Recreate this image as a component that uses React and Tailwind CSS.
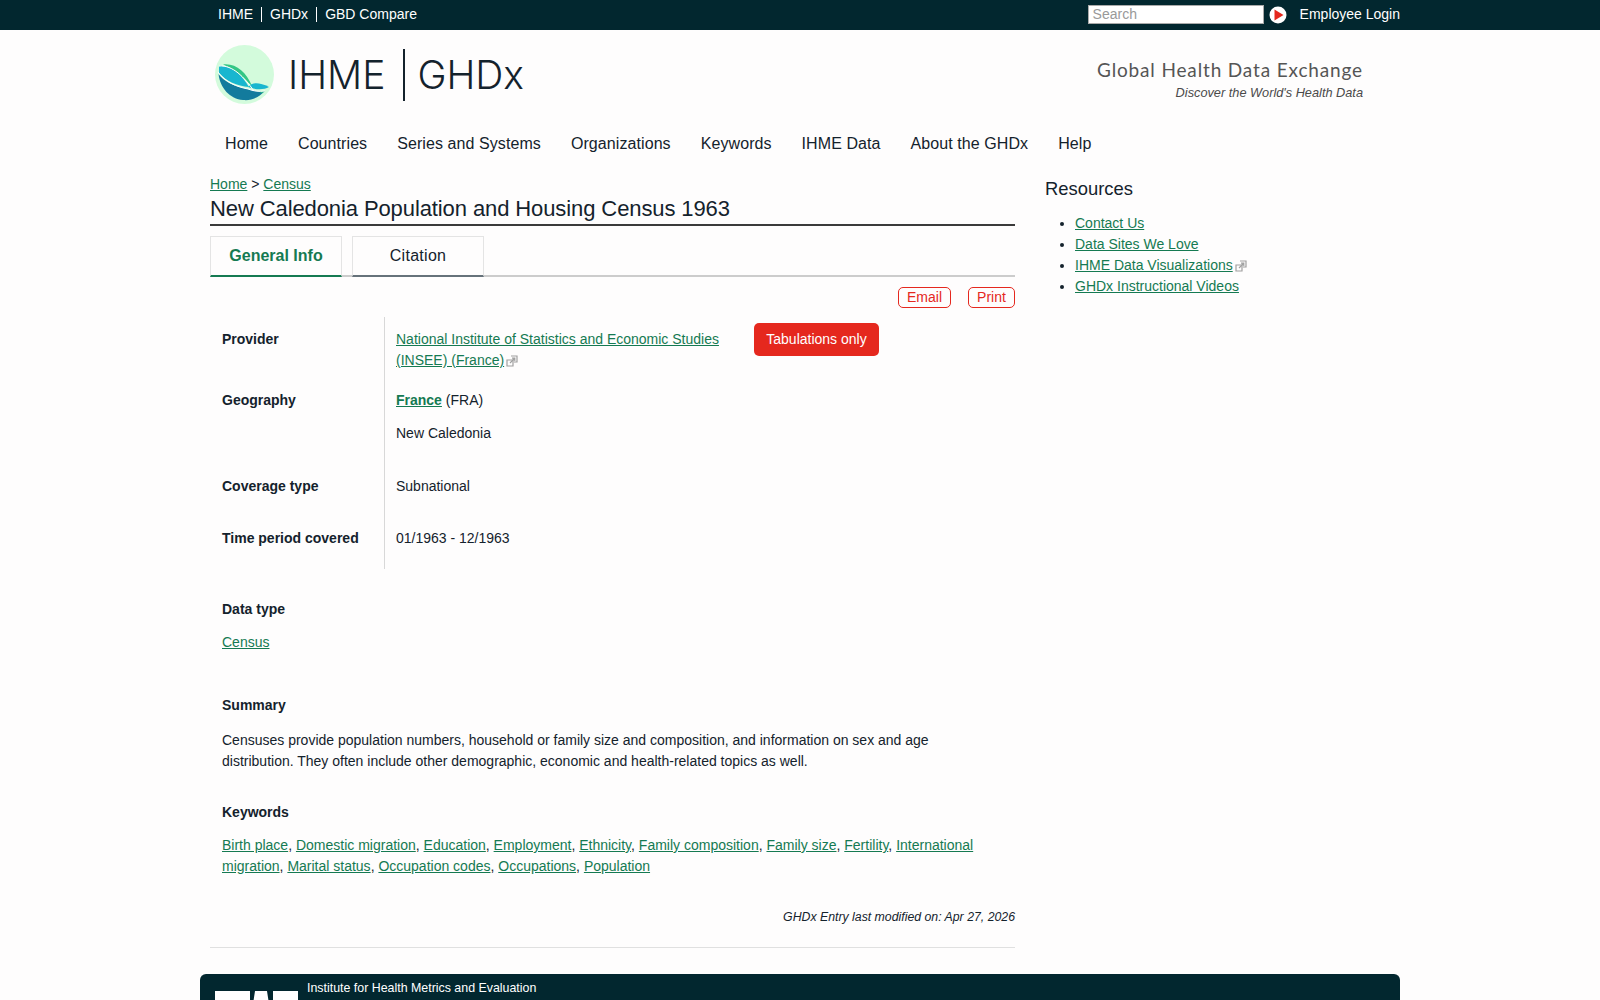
const sans = "font-['Liberation_Sans',Arial,sans-serif]";

function Ext() {
  return (
    <svg className="inline-block ml-[2px] align-[-2px]" width="12" height="12" viewBox="0 0 12 12" fill="none" stroke="#a0a0a0" strokeWidth="1.2">
      <path d="M5 1h6v6H8" />
      <path d="M1 5h6v6H1z" />
      <path d="M4 8l4.5-4.5M6 3.2h2.8V6" />
    </svg>
  );
}

function A({ children, className = "" }) {
  return <a href="#" className={"text-[#157a52] underline " + className}>{children}</a>;
}

function Logo() {
  return (
    <svg width="59" height="59" viewBox="0 0 59 59">
      <circle cx="29.5" cy="29.5" r="29.5" fill="#d3fbdc" />
      <path d="M3.5 29 C8 36 20 42 33 44 C38 46 44 47 50 46 C44 52 37 56 28 55 C15 54 5 43 3.5 29Z" fill="#137b9d" />
      <path d="M4 22 C4 21 5 20.5 7 21 C20 22 28 32 34 42 C22 41 11 36 4 28Z" fill="#18b6cf" />
      <path d="M8 19.5 C21 18 31 27 37 41 C29 34 21 24 8 19.5Z" fill="#33c685" />
      <path d="M33 42 C37 37 44 37 54 42 C49 45 41 45 33 42Z" fill="#18b6cf" />
      <path d="M43 46.5 L50 46 L47 48 Z" fill="#33c685" />
      <path d="M3 27 C10 37 22 42 33 44 C38 46 44 47 50 46 M4 21 C18 20 29 32 39 46" stroke="#fff" strokeWidth="1" fill="none" />
    </svg>
  );
}

function Row({ label, children, h }) {
  return (
    <div className={"flex " + h}>
      <div className="w-[174px] shrink-0 pl-3 pt-[7px] font-bold">{label}</div>
      <div className="flex-1 border-l border-[#d8d8d8] pl-[11px] pt-[7px]">{children}</div>
    </div>
  );
}

export default function App() {
  const nav = ["Home", "Countries", "Series and Systems", "Organizations", "Keywords", "IHME Data", "About the GHDx", "Help"];
  const kw = ["Birth place", "Domestic migration", "Education", "Employment", "Ethnicity", "Family composition", "Family size", "Fertility", "International", "migration", "Marital status", "Occupation codes", "Occupations", "Population"];
  return (
    <div className={"h-[1000px] overflow-hidden bg-[#fefdfd] text-[#14222c] text-[14px] leading-[21px] " + sans}>
      <div className="h-[30px] bg-[#02272f] text-white">
        <div className="mx-auto flex h-full w-[1200px] items-center justify-between pb-[1px]">
          <div className="flex items-center pl-[18px] text-[14px]">
            <a className="pr-2 border-r border-white leading-[15px]">IHME</a>
            <a className="px-2 border-r border-white leading-[15px]">GHDx</a>
            <a className="pl-2 leading-[15px]">GBD Compare</a>
          </div>
          <div className="flex items-center">
            <div className="mr-[5px] flex h-[19px] w-[176px] items-center border border-[#aaa] bg-white pl-1 text-[14px] text-[#999]">Search</div>
            <svg width="18" height="18" viewBox="0 0 18 18" className="mr-[13px]">
              <circle cx="9" cy="9" r="8.5" fill="#fff" />
              <path d="M5.5 3.5L14.5 9L5.5 14.5Z" fill="#e5281e" />
            </svg>
            <span className="text-[14px]">Employee Login</span>
          </div>
        </div>
      </div>

      <div className="mx-auto w-[1200px]">
        <div className="flex h-[90px] items-start justify-between pl-[15px] pr-[37px]">
          <div className="mt-[15px] flex items-center">
            <Logo />
            <span className="ml-[14px] font-['Inter'] text-[39px] font-light leading-none text-[#14222c]">IHME</span>
            <span className="ml-[18px] h-[52px] w-[2px] bg-[#14222c]" />
            <span className="ml-[12px] font-['Inter'] text-[39px] font-light leading-none text-[#14222c]">GHDx</span>
          </div>
          <div className="pt-[28px] text-right">
            <div className="font-['Lato'] text-[19px] leading-[24px] tracking-[0.85px] text-[#555]">Global Health Data Exchange</div>
            <div className="text-[12.75px] italic leading-[22px] text-[#4a4a4a]">Discover the World's Health Data</div>
          </div>
        </div>

        <nav className="flex h-[47px] items-center gap-[30px] pl-[25px] text-[16px] tracking-[0.08px] text-[#14222c]">
          {nav.map((n) => <a key={n}>{n}</a>)}
        </nav>

        <div className="flex pl-[10px]">
          <main className="w-[805px] shrink-0">
            <div className="pt-[7px] leading-[21px]"><A>Home</A> &gt; <A>Census</A></div>
            <h1 className="border-b-2 border-[#3a3a3a] pb-[2px] text-[22px] font-normal leading-[27px] tracking-[-0.1px]">New Caledonia Population and Housing Census 1963</h1>
            <div className="mt-[10px] flex h-[41px] items-stretch gap-[10px] border-b-2 border-[#cccccc] text-[16px]">
              <div className="-mb-[2px] flex w-[132px] items-center justify-center border border-[#e4e4e4] border-b-[#157a52] pb-[2px] font-bold text-[#157a52] [border-bottom-width:2px]">General Info</div>
              <div className="-mb-[2px] flex w-[132px] items-center justify-center border border-[#e4e4e4] border-b-[#66727a] pb-[2px] tracking-[0.3px] [border-bottom-width:2px]">Citation</div>
            </div>
            <div className="mt-[10px] flex justify-end gap-[17px] text-[14px] text-[#e5281e]">
              <a className="flex h-[21px] w-[53px] items-center justify-center rounded-[5px] border border-[#e5281e]">Email</a>
              <a className="flex h-[21px] w-[47px] items-center justify-center rounded-[5px] border border-[#e5281e]">Print</a>
            </div>

            <div className="mt-[9px]">
              <div className="flex h-[66px]">
                <div className="w-[174px] shrink-0 pl-3 pt-[12px] font-bold">Provider</div>
                <div className="flex flex-1 border-l border-[#d8d8d8] pl-[11px] pt-[12px]">
                  <div className="w-[330px]"><A>National Institute of Statistics and Economic Studies (INSEE) (France)</A><Ext /></div>
                  <div className="ml-[28px] -mt-[6px] flex h-[33px] w-[125px] items-center justify-center rounded-[5px] bg-[#e5281e] text-white">Tabulations only</div>
                </div>
              </div>
              <Row label="Geography" h="h-[86px]">
                <div><A className="font-bold">France</A> (FRA)</div>
                <div className="mt-[12px]">New Caledonia</div>
              </Row>
              <Row label="Coverage type" h="h-[52px]">Subnational</Row>
              <Row label="Time period covered" h="h-[48px]">01/1963 - 12/1963</Row>
            </div>

            <section className="mt-[30px] pl-3">
              <div className="font-bold">Data type</div>
              <div className="mt-[12px]"><A>Census</A></div>
            </section>
            <section className="mt-[42px] pl-3 pr-[30px]">
              <div className="font-bold">Summary</div>
              <p className="mt-[14px]">Censuses provide population numbers, household or family size and composition, and information on sex and age distribution. They often include other demographic, economic and health-related topics as well.</p>
            </section>
            <section className="mt-[30px] pl-3 pr-[30px]">
              <div className="font-bold">Keywords</div>
              <p className="mt-[12px]">
                {kw.map((k, i) => (
                  <span key={k}><A>{k}</A>{i < kw.length - 1 && k !== "International" ? ", " : " "}</span>
                ))}
              </p>
            </section>
            <div className="mt-[30px] text-right text-[12.3px] italic">GHDx Entry last modified on: Apr 27, 2026</div>
            <div className="mt-[19px] border-t border-[#e0e0e0]" />
          </main>

          <aside className="ml-[30px] flex-1">
            <h2 className="pt-[10px] text-[18.4px] font-normal leading-[24px]">Resources</h2>
            <ul className="mt-[12px] list-disc pl-[30px]">
              <li><A>Contact Us</A></li>
              <li><A>Data Sites We Love</A></li>
              <li><A>IHME Data Visualizations</A><Ext /></li>
              <li><A>GHDx Instructional Videos</A></li>
            </ul>
          </aside>
        </div>

        <footer className="mt-[26px] flex h-[100px] items-start rounded-t-[6px] bg-[#02272f] pl-[15px] text-white">
          <svg width="83" height="26" viewBox="0 0 83 26" className="mt-[17px]">
            <rect x="0" y="0" width="35" height="26" fill="#fff" />
            <path d="M36 26 L40 0 H52 L56 26Z" fill="#fff" />
            <rect x="58" y="0" width="25" height="26" fill="#fff" />
          </svg>
          <div className="ml-[9px] pt-[4px] text-[12.4px] leading-[20px]">Institute for Health Metrics and Evaluation</div>
        </footer>
      </div>
    </div>
  );
}
